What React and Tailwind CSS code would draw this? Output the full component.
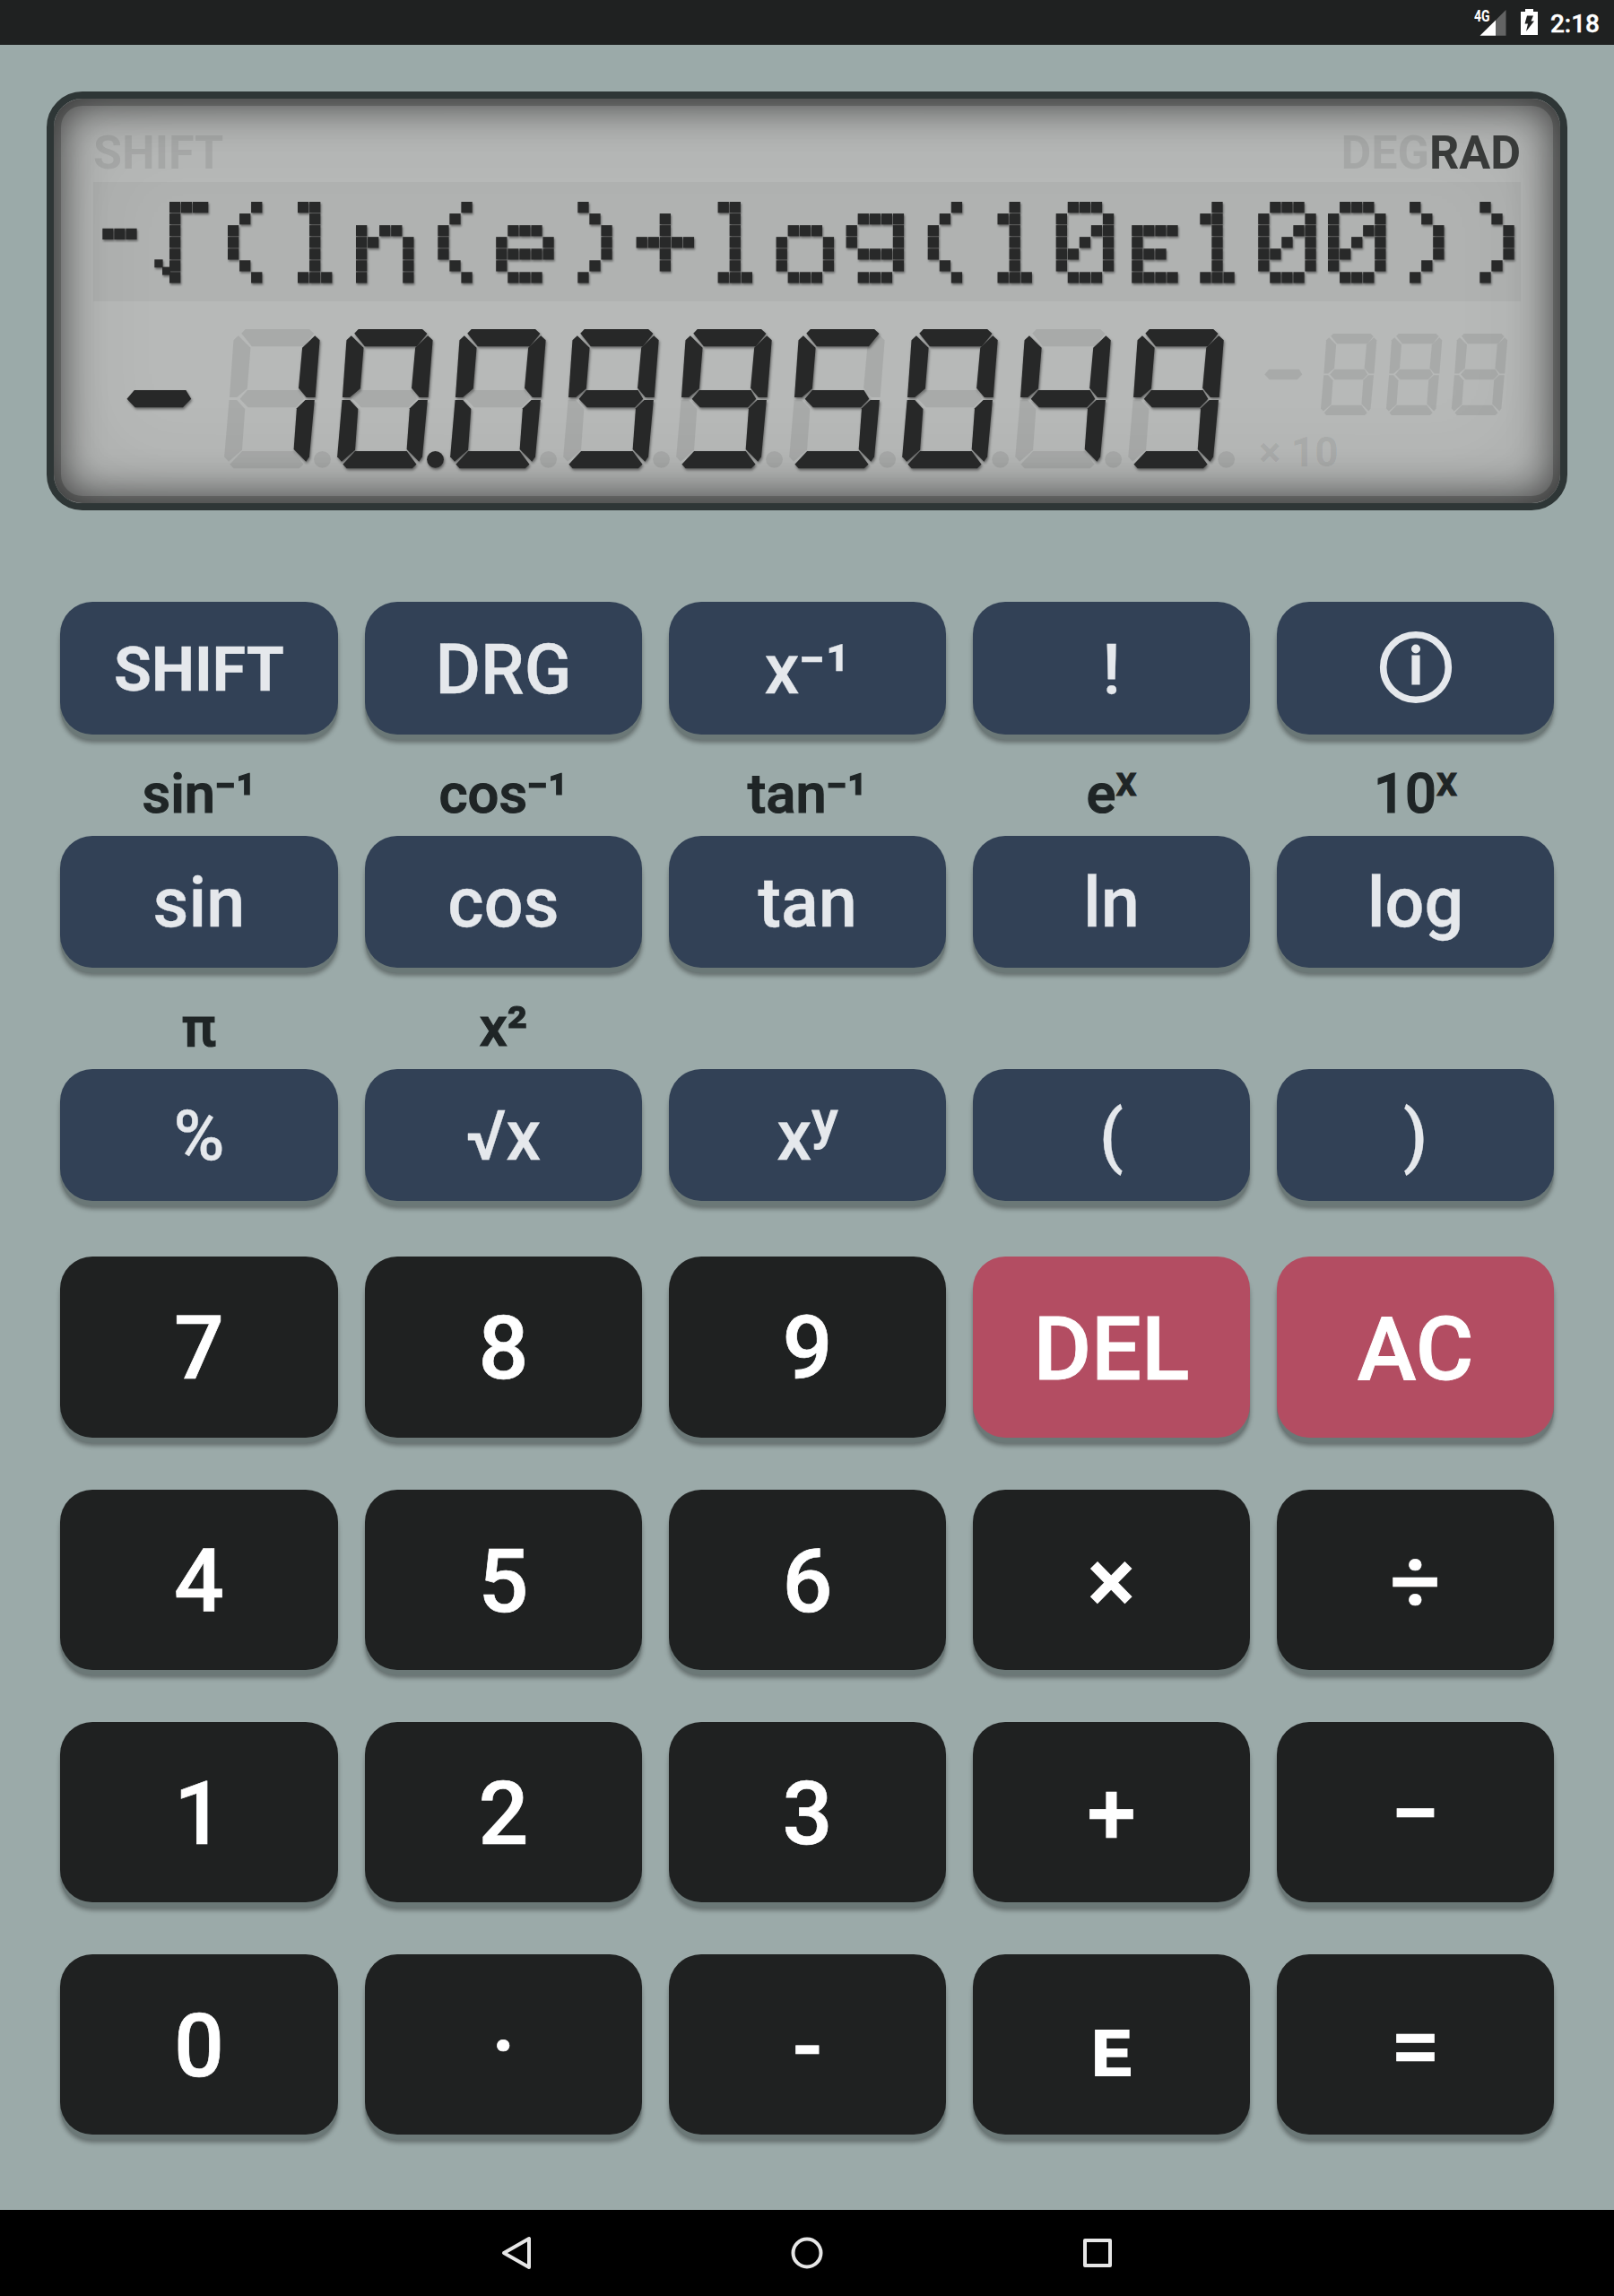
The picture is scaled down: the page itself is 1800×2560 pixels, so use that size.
import React from "react";

// 5x7 bitmaps for the formula line
const glyphs = {
  "(": ["..#..", ".#...", "#....", "#....", "#....", ".#...", "..#.."],
  ")": ["#....", ".#...", "..#..", "..#..", "..#..", ".#...", "#...."],
  l: ["##...", ".#...", ".#...", ".#...", ".#...", ".#...", "###.."],
  n: [".....", ".....", "#.##.", "##..#", "#...#", "#...#", "#...#"],
  e: [".....", ".....", ".###.", "#...#", "#####", "#....", ".###."],
  "+": [".....", "..#..", "..#..", "#####", "..#..", "..#..", "....."],
  o: [".....", ".....", ".###.", "#...#", "#...#", "#...#", ".###."],
  g: [".....", ".####", "#...#", "#...#", ".####", "....#", ".###."],
  1: [".#...", "##...", ".#...", ".#...", ".#...", ".#...", "###.."],
  0: [".###.", "#...#", "#..##", "#.#.#", "##..#", "#...#", ".###."],
  E: [".....", ".....", "####.", "#....", "###..", "#....", "####."],
};

// [character, x offset inside the strip]
const formula = [
  ["(", 150],
  ["l", 228],
  ["n", 293],
  ["(", 384.3],
  ["e", 449.2],
  [")", 540.3],
  ["+", 605.6],
  ["l", 696.6],
  ["o", 761.6],
  ["g", 839.6],
  ["(", 930.7],
  ["1", 1008.5],
  ["0", 1073.7],
  ["E", 1158.2],
  ["1", 1234.3],
  ["0", 1299.2],
  ["0", 1377],
  [")", 1468.1],
  [")", 1546.3],
];

const CELL = 13.05;
const DOT = 12.3;

const FormulaLine = () => (
  <svg
    width="1592"
    height="133"
    viewBox="0 0 1592 133"
    aria-label="-√(ln(e)+log(10ᴇ100))"
    className="block bg-black/[0.035]"
  >
    <g fill="#282929" className="drop-shadow-[1.5px_2px_1px_rgba(0,0,0,0.4)]">
      {/* minus */}
      {[10.3, 23.3, 36.3].map((x) => (
        <rect key={x} x={x} y="51.7" width={DOT} height={DOT} />
      ))}
      {/* root sign */}
      {[0, 1, 2, 3, 4, 5, 6].map((r) => (
        <rect key={r} x="85" y={22 + r * CELL} width={DOT} height={DOT} />
      ))}
      <rect x="98" y="22" width={DOT} height={DOT} />
      <rect x="111" y="22" width="17.3" height={DOT} />
      <rect x="68.3" y="86.3" width="9.3" height="9" />
      <rect x="77" y="94.6" width="9" height="9" />
      {formula.map(([ch, x], i) =>
        glyphs[ch].map((row, r) =>
          row
            .split("")
            .map((c, col) =>
              c === "#" ? (
                <rect
                  key={`${i}-${r}-${col}`}
                  x={x + col * CELL}
                  y={22 + r * CELL}
                  width={DOT}
                  height={DOT}
                />
              ) : null
            )
        )
      )}
    </g>
  </svg>
);

const segments = {
  a: "19.1,4.7 23.6,0 94.9,0 100.3,5 88.7,19.3 30.7,19.3",
  b: "101.1,7.3 106.5,12.3 101.5,76 91.6,76 82.9,65.7 87,20.7",
  c: "90.4,79 100.7,79 94.9,142.3 91.2,147.7 77.5,134 80.8,88.3",
  d: "19.9,136 77.5,136 88.3,150.7 83.7,155.3 10.4,155.3 6.2,150.7",
  e: "5.4,79 14.1,79 23.2,89 19.9,134.7 4.9,147.7 0,142.3",
  f: "15.7,7.3 29.4,20.7 25.7,66.3 14.1,76 5.8,76 10.3,12.3",
  g: "17.4,77.7 25.7,68 83.3,68 89.1,77.7 79.9,87.3 26.5,87.3",
};

const lit = {
  0: "abcdef",
  1: "bc",
  4: "bcfg",
  5: "acdfg",
  9: "abcdfg",
};

const Digit = ({ x, value, dot }) => {
  const on = lit[value] || "";
  return (
    <g transform={`translate(${x} 0)`}>
      <g fill="#000" fillOpacity="0.08">
        {Object.keys(segments)
          .filter((s) => !on.includes(s))
          .map((s) => (
            <polygon key={s} points={segments[s]} />
          ))}
        {dot === false && <circle cx="109.4" cy="145.3" r="9.4" />}
      </g>
      <g fill="#272828" className="drop-shadow-[1.5px_2px_1.5px_rgba(0,0,0,0.45)]">
        {on.split("").map((s) => (
          <polygon key={s} points={segments[s]} />
        ))}
        {dot && <circle cx="109.4" cy="145.3" r="9.4" />}
      </g>
    </g>
  );
};

const ResultLine = () => (
  <svg
    width="1290"
    height="165"
    viewBox="0 0 1290 165"
    aria-label="-10.0995049"
    className="block shrink-0"
  >
    <polygon
      points={segments.g}
      transform="translate(20.1 0)"
      fill="#272828"
      className="drop-shadow-[1.5px_2px_1.5px_rgba(0,0,0,0.45)]"
    />
    {"100995049".split("").map((d, i) => (
      <Digit key={i} x={146.1 + i * 126.02} value={d} dot={i === 1} />
    ))}
  </svg>
);

const Exponent = () => (
  <svg width="290" height="95" viewBox="0 0 290 95" className="block">
    <g transform="translate(6.1 0) scale(0.586)">
      <polygon points={segments.g} fill="#000" fillOpacity="0.08" />
    </g>
    {[0, 1, 2].map((i) => (
      <g key={i} transform={`translate(${79 + i * 72.9} 0) scale(0.586)`}>
        <Digit x={0} value="" />
      </g>
    ))}
  </svg>
);

const Sup = ({ children, className = "" }) => (
  <span className={`inline-block ${className}`}>{children}</span>
);

const styles = {
  blue: "bg-[#324156] pt-[3px] text-[#e5e8ec] text-[77.5px] [-webkit-text-stroke:0.3px]",
  dark: "bg-[#1f2121] pt-[5px] text-white text-[98.5px] [-webkit-text-stroke:0.7px]",
  red: "bg-[#b34d62] pt-[5px] text-white text-[99px] [-webkit-text-stroke:0.9px]",
};

const Key = ({ kind, children }) => (
  <button
    className={`flex h-full w-full items-center justify-center rounded-[36px] leading-none font-medium shadow-[0_6px_0_#6b7877,0_9px_5px_rgba(0,0,0,0.35)] ${styles[kind]}`}
  >
    {children}
  </button>
);

const Label = ({ children }) => (
  <div className="flex h-[113px] items-center justify-center pt-[20px] text-[61.5px] leading-none font-medium text-[#1f2526] [-webkit-text-stroke:1.2px]">
    {children}
  </div>
);

const InfoIcon = () => (
  <svg width="82" height="82" viewBox="0 0 82 82" fill="none" className="-mt-[5px] ml-[1px]">
    <circle cx="41" cy="41" r="36.3" stroke="#e5e8ec" strokeWidth="7.6" />
    <circle cx="41" cy="20.5" r="5" fill="#e5e8ec" />
    <rect x="36.4" y="27.5" width="9.2" height="33" fill="#e5e8ec" />
  </svg>
);

const App = () => {
  return (
    <div className="flex h-[2560px] w-[1800px] flex-col overflow-hidden bg-[#9baaa9] font-['Roboto',sans-serif]">
      {/* status bar */}
      <div className="flex h-[50px] items-start justify-end bg-[#1f2121] pr-[16px] text-white">
        <svg width="36" height="50" viewBox="0 0 36 50" className="mr-[16px]">
          <text
            x="0"
            y="24"
            fill="#fff"
            fontSize="17.5"
            fontWeight="700"
            textLength="17.5"
            lengthAdjust="spacingAndGlyphs"
          >
            4G
          </text>
          <path d="M24 22.5 35.5 11V39.7H24z" fill="#636464" />
          <path d="M6.5 39.7 24 22.5V39.7z" fill="#fff" />
        </svg>
        <svg width="19" height="50" viewBox="0 0 19 50" className="mr-[14px]">
          <path d="M5 10h9v3h5v26H0V13h5z" fill="#fff" />
          <path d="M7 17.5h7l-2.500 6h3.500L6 35l2-8.500H4.500z" fill="#1f2121" />
        </svg>
        <span className="pt-[13px] text-[28px] leading-[28px] font-medium [-webkit-text-stroke:0.4px]">
          2:18
        </span>
      </div>

      {/* lcd */}
      <div className="mx-[52px] mt-[52px] h-[467px] rounded-[40px] border-8 border-[#2e3636] bg-[#b7b9b8] px-[44px] shadow-[inset_0_0_0_8px_rgba(0,0,0,0.2),inset_0_0_44px_8px_rgba(0,0,0,0.6),inset_0_0_120px_0_rgba(0,0,0,0.12)]">
        <div className="flex h-[93px] items-start justify-between pt-[35px] text-[52px] leading-[51px] font-bold">
          <span className="text-black/[0.08]">SHIFT</span>
          <span className="flex">
            <span className="text-black/[0.08]">DEG</span>
            <span className="text-[#383a39]">RAD</span>
          </span>
        </div>
        <FormulaLine />
        <div className="flex pt-[31px]">
          <ResultLine />
          <div className="flex flex-col pt-[5px]">
            <Exponent />
            <span className="pt-[15px] pl-[10px] text-[46px] leading-[45px] font-bold text-black/[0.08]">
              × 10
            </span>
          </div>
        </div>
      </div>

      {/* keypad */}
      <div className="grid grid-cols-[310px_309px_309px_309px_309px] grid-rows-[148px_113px_147px_113px_147px_62px_202px_58px_201px_58px_201px_58px_201px] gap-x-[30px] px-[67px] pt-[102px]">
        <Key kind="blue">
          <span className="text-[68px] font-bold">SHIFT</span>
        </Key>
        <Key kind="blue">DRG</Key>
        <Key kind="blue">x⁻¹</Key>
        <Key kind="blue">!</Key>
        <Key kind="blue">
          <InfoIcon />
        </Key>

        <Label>sin⁻¹</Label>
        <Label>cos⁻¹</Label>
        <Label>tan⁻¹</Label>
        <Label>
          e<Sup className="-mt-[29px] text-[46px]">x</Sup>
        </Label>
        <Label>
          10<Sup className="-mt-[29px] text-[46px]">x</Sup>
        </Label>

        <Key kind="blue">sin</Key>
        <Key kind="blue">cos</Key>
        <Key kind="blue">tan</Key>
        <Key kind="blue">ln</Key>
        <Key kind="blue">log</Key>

        <Label>π</Label>
        <Label>x²</Label>
        <div className="col-span-3" />

        <Key kind="blue">%</Key>
        <Key kind="blue">√x</Key>
        <Key kind="blue">
          x<Sup className="-mt-[36px] text-[60px] [-webkit-text-stroke:1px]">y</Sup>
        </Key>
        <Key kind="blue">(</Key>
        <Key kind="blue">)</Key>

        <div className="col-span-5" />

        <Key kind="dark">7</Key>
        <Key kind="dark">8</Key>
        <Key kind="dark">9</Key>
        <Key kind="red">DEL</Key>
        <Key kind="red">AC</Key>

        <div className="col-span-5" />

        <Key kind="dark">4</Key>
        <Key kind="dark">5</Key>
        <Key kind="dark">6</Key>
        <Key kind="dark">
          <span className="[-webkit-text-stroke:1.5px]">×</span>
        </Key>
        <Key kind="dark">÷</Key>

        <div className="col-span-5" />

        <Key kind="dark">1</Key>
        <Key kind="dark">2</Key>
        <Key kind="dark">3</Key>
        <Key kind="dark">+</Key>
        <Key kind="dark">−</Key>

        <div className="col-span-5" />

        <Key kind="dark">0</Key>
        <Key kind="dark">·</Key>
        <Key kind="dark">-</Key>
        <Key kind="dark">
          <span className="pr-[1px] font-bold [-webkit-text-stroke:0px]">ᴇ</span>
        </Key>
        <Key kind="dark">=</Key>
      </div>

      {/* navigation bar */}
      <div className="mt-auto flex h-[96px] items-center justify-center gap-[284px] bg-black">
        <svg width="40" height="40" viewBox="0 0 40 40" fill="none" stroke="#e6e6e6" strokeWidth="4" strokeLinejoin="round">
          <path d="M6 20 34 4v32z" />
        </svg>
        <svg width="40" height="40" viewBox="0 0 40 40" fill="none" stroke="#e6e6e6" strokeWidth="4">
          <circle cx="20" cy="20" r="15.500" />
        </svg>
        <svg width="40" height="40" viewBox="0 0 40 40" fill="none" stroke="#e6e6e6" strokeWidth="4" strokeLinejoin="round">
          <path d="M6 6h28v28H6z" />
        </svg>
      </div>
    </div>
  );
};

export default App;
